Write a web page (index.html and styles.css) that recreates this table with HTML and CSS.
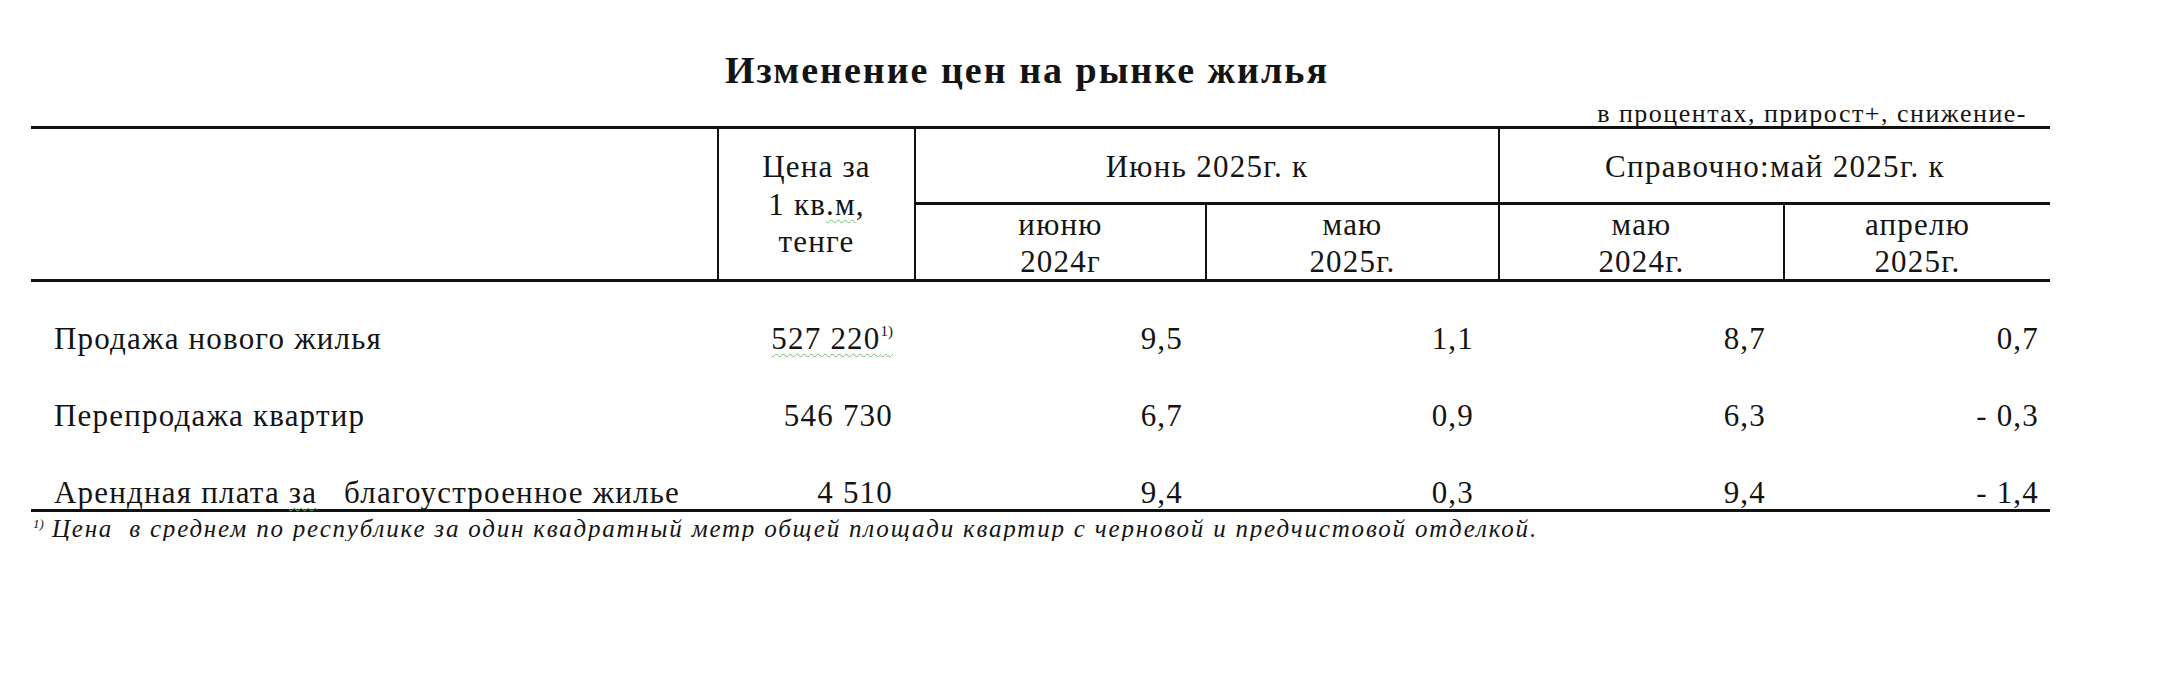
FILE: index.html
```html
<!DOCTYPE html>
<html lang="ru">
<head>
<meta charset="utf-8">
<title>Изменение цен на рынке жилья</title>
<link rel="stylesheet" href="styles.css">
</head>
<body>
<div class="page">
  <h1 class="title">Изменение цен на рынке жилья</h1>
  <div class="unit">в процентах, прирост+, снижение-</div>
  <div class="table">
    <div class="hc h-blank"></div>
    <div class="hc h-price">Цена за<br>1 кв<span class="gram">.м</span>,<br>тенге</div>
    <div class="hc h-group h-june">Июнь 2025г. к</div>
    <div class="hc h-group h-ref">Справочно:май 2025г. к</div>
    <div class="hc h-sub">июню<br>2024г</div>
    <div class="hc h-sub">маю<br>2025г.</div>
    <div class="hc h-sub">маю<br>2024г.</div>
    <div class="hc h-sub h-last">апрелю<br>2025г.</div>

    <div class="td lbl">Продажа нового жилья</div>
    <div class="td num c2"><span class="gram">527 220<sup class="fn">1)</sup></span></div>
    <div class="td num c3">9,5</div>
    <div class="td num c4">1,1</div>
    <div class="td num c5">8,7</div>
    <div class="td num c6">0,7</div>

    <div class="td lbl">Перепродажа квартир</div>
    <div class="td num c2">546 730</div>
    <div class="td num c3">6,7</div>
    <div class="td num c4">0,9</div>
    <div class="td num c5">6,3</div>
    <div class="td num c6">- 0,3</div>

    <div class="td lbl">Арендная плата <span class="gram">за</span>&nbsp;&nbsp; благоустроенное жилье</div>
    <div class="td num c2">4 510</div>
    <div class="td num c3">9,4</div>
    <div class="td num c4">0,3</div>
    <div class="td num c5">9,4</div>
    <div class="td num c6">- 1,4</div>
  </div>
  <p class="note"><sup class="note-fn">1)</sup> Цена&nbsp; в среднем по республике за один квадратный метр общей площади квартир с черновой и <span class="spell">предчистовой</span> отделкой.</p>
</div>
</body>
</html>
```

FILE: styles.css
```css
html, body {
  margin: 0;
  padding: 0;
  background: #ffffff;
}

body {
  font-family: "Liberation Serif", "Times New Roman", serif;
  color: #141414;
}

.page {
  width: 2019px;
  padding-left: 31px;
}

.title {
  margin: 0;
  padding-top: 51px;
  padding-right: 27px;
  font-size: 38px;
  line-height: 38px;
  font-weight: bold;
  text-align: center;
  letter-spacing: 2px;
}

.unit {
  margin-top: 13px;
  height: 24px;
  line-height: 24px;
  font-size: 26px;
  letter-spacing: 1.5px;
  text-align: right;
  padding-right: 23px;
}

.table {
  display: grid;
  grid-template-columns: 688px 197px 291px 293px 285px 265px;
  grid-template-rows: 76px 77px 77px 77px 73px;
  border-top: 3px solid #111;
  border-bottom: 3px solid #111;
  font-size: 31px;
  letter-spacing: 1.2px;
}

.hc {
  box-sizing: border-box;
  text-align: center;
  border-bottom: 3px solid #111;
}

.h-blank {
  grid-column: 1;
  grid-row: 1 / span 2;
  border-right: 2px solid #111;
}

.h-price {
  grid-column: 2;
  grid-row: 1 / span 2;
  border-right: 2px solid #111;
  padding-top: 19px;
  line-height: 37.5px;
}

.h-group {
  grid-row: 1;
  padding-top: 19px;
  line-height: 37px;
  letter-spacing: 1.3px;
}

.h-june {
  grid-column: 3 / span 2;
  border-right: 2px solid #111;
}

.h-ref {
  grid-column: 5 / span 2;
}

.h-sub {
  grid-row: 2;
  padding-top: 1px;
  line-height: 37px;
  border-right: 2px solid #111;
}

.h-last {
  border-right: none;
}

.td {
  box-sizing: border-box;
  padding-top: 38px;
  line-height: 38px;
  white-space: nowrap;
}

.lbl {
  padding-left: 23px;
}

.num {
  text-align: right;
}

.c2 { padding-right: 23px; }
.c3 { padding-right: 24px; }
.c4 { padding-right: 26px; }
.c5 { padding-right: 19px; }
.c6 { padding-right: 11px; }

.fn {
  font-size: 15px;
  line-height: 0;
  vertical-align: 13px;
  letter-spacing: 0;
}

.gram {
  text-decoration: underline wavy #6fbf6f;
  text-decoration-thickness: 1px;
  text-underline-offset: 4px;
}

.spell {
  text-decoration: underline wavy #e06060;
  text-decoration-thickness: 1px;
  text-underline-offset: 4px;
}

.note {
  margin: 5px 0 0 2px;
  font-size: 25px;
  line-height: 24px;
  letter-spacing: 1.8px;
  font-style: italic;
  white-space: nowrap;
}

.note-fn {
  font-size: 13px;
  line-height: 0;
  vertical-align: 9px;
  letter-spacing: 0;
}
```
